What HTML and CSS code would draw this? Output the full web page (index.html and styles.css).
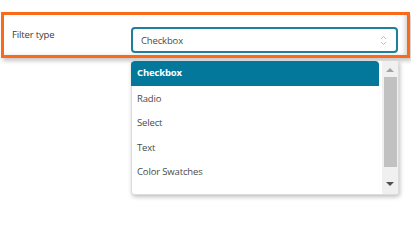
FILE: index.html
```html
<!DOCTYPE html>
<html lang="en">
<head>
<meta charset="utf-8">
<title>Filter type</title>
<link rel="stylesheet" href="styles.css">
</head>
<body>
<div class="page">
  <div class="field">
    <label class="field-label">Filter type</label>
    <div class="select">
      <span class="select-value">Checkbox</span>
      <svg class="select-arrows" width="7" height="11" viewBox="0 0 7 11">
        <path d="M1 4 L3.5 1.5 L6 4" fill="none" stroke="#b9bcc4" stroke-width="1"/>
        <path d="M1 7 L3.5 9.5 L6 7" fill="none" stroke="#b9bcc4" stroke-width="1"/>
      </svg>
    </div>
  </div>
  <div class="dropdown">
    <ul class="options">
      <li class="option active">Checkbox</li>
      <li class="option">Radio</li>
      <li class="option">Select</li>
      <li class="option">Text</li>
      <li class="option">Color Swatches</li>
    </ul>
    <div class="scrollbar">
      <div class="arrow up"></div>
      <div class="thumb"></div>
      <div class="arrow down"></div>
    </div>
  </div>
</div>
</body>
</html>
```

FILE: styles.css
```css
html, body {
  margin: 0;
  padding: 0;
  background: #ffffff;
}
body {
  font-family: "Open Sans", "Noto Sans", sans-serif;
  font-size: 9.5px;
  letter-spacing: -0.15px;
  color: #444;
}
.page {
  position: relative;
  width: 411px;
  height: 212px;
  padding-top: 12px;
  box-sizing: border-box;
}
.field {
  margin-left: 1px;
  width: 409px;
  height: 46px;
  box-sizing: border-box;
  border: 3px solid #fb6a19;
  display: flex;
  align-items: flex-start;
  padding: 12px 9px 0 8px;
  box-shadow: 2px 3px 4px rgba(0,0,0,0.22), inset -5px -2px 5px -3px rgba(0,0,0,0.18);
}
.field-label {
  width: 119px;
  flex: none;
  color: #3a3a3a;
  line-height: 14px;
  margin-top: 1px;
}
.select {
  flex: 1;
  height: 26px;
  box-sizing: border-box;
  border: 2px solid #1f7d9e;
  border-radius: 4px;
  display: flex;
  align-items: center;
  padding: 0 9px 0 8px;
}
.select-value {
  flex: 1;
  color: #4a4a4a;
  line-height: 14px;
  padding-top: 2px;
}
.select-arrows {
  display: block;
}
.dropdown {
  position: absolute;
  left: 131px;
  top: 61px;
  width: 268px;
  height: 134px;
  box-sizing: border-box;
  border: 1px solid #dcdcdc;
  border-top: none;
  border-radius: 0 0 4px 4px;
  background: #fff;
  display: flex;
  box-shadow: 1px 2px 4px rgba(0,0,0,0.25);
}
.options {
  list-style: none;
  margin: 0 3px 0 -1px;
  padding: 0;
  flex: 1;
}
.option {
  height: 24.6px;
  line-height: 25.5px;
  padding-left: 6px;
  color: #4a4a4a;
}
.option.active {
  background: #03789b;
  color: #fff;
  font-weight: bold;
  line-height: 24.6px;
  border-radius: 4px 4px 0 0;
}
.scrollbar {
  width: 16px;
  background: #f0f0f0;
  display: flex;
  flex-direction: column;
  align-items: center;
}
.arrow {
  width: 0;
  height: 0;
  border-left: 4px solid transparent;
  border-right: 4px solid transparent;
}
.arrow.up {
  margin-top: 7px;
  border-bottom: 4px solid #a3a3a3;
}
.arrow.down {
  margin-top: 15px;
  border-top: 4px solid #505050;
}
.thumb {
  width: 13px;
  height: 90px;
  margin-top: 5px;
  background: #c1c1c1;
}
```
